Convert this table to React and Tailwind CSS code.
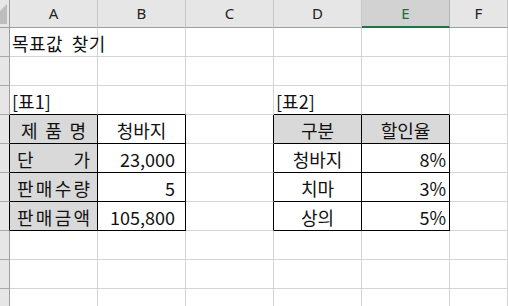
import React from 'react';

const COLS = ['A', 'B', 'C', 'D', 'E', 'F'];
const FONT = { fontFamily: '"Noto Sans CJK KR", "Noto Sans", sans-serif' };

// spread letters across the cell like Excel's distributed alignment
function Spread({ chars, pad }) {
  return (
    <div className={`flex w-full justify-between ${pad}`}>
      {chars.map((c, i) => (
        <span key={i}>{c}</span>
      ))}
    </div>
  );
}

const cells = {
  '1A': { text: '목표값 찾기', align: 'left', extra: 'tracking-[0.5px] [word-spacing:4px]' },
  '3A': { text: '[표1]', align: 'left' },
  '3D': { text: '[표2]', align: 'left' },
  '4A': { node: <Spread chars={['제', '품', '명']} pad="px-[11px]" /> },
  '4B': { text: '청바지', align: 'center' },
  '5A': { node: <Spread chars={['단', '가']} pad="px-[7px]" /> },
  '5B': { text: '23,000', align: 'right', pr: 'pr-[10px]' },
  '6A': { node: <Spread chars={['판', '매', '수', '량']} pad="px-[7px]" /> },
  '6B': { text: '5', align: 'right', pr: 'pr-[10px]' },
  '7A': { node: <Spread chars={['판', '매', '금', '액']} pad="px-[7px]" /> },
  '7B': { text: '105,800', align: 'right', pr: 'pr-[10px]' },
  '4D': { text: '구분', align: 'center' },
  '4E': { text: '할인율', align: 'center' },
  '5D': { text: '청바지', align: 'center' },
  '5E': { text: '8%', align: 'right', pr: 'pr-[3px]' },
  '6D': { text: '치마', align: 'center' },
  '6E': { text: '3%', align: 'right', pr: 'pr-[3px]' },
  '7D': { text: '상의', align: 'center' },
  '7E': { text: '5%', align: 'right', pr: 'pr-[3px]' },
};

function Cell({ row, col }) {
  const key = `${row}${col}`;
  const inT1 = row >= 4 && row <= 7 && (col === 'A' || col === 'B');
  const inT2 = row >= 4 && row <= 7 && (col === 'D' || col === 'E');
  const blackRight = (row >= 4 && row <= 7 && (col === 'B' || col === 'C' || col === 'E')) || inT1 || inT2;
  const blackBottom = (row >= 3 && row <= 7) && (col === 'A' || col === 'B' || col === 'D' || col === 'E');
  const gray = (inT1 && col === 'A') || (inT2 && row === 4);
  const c = cells[key];

  let justify = 'justify-start pl-[2px]';
  if (c?.align === 'center') justify = 'justify-center';
  if (c?.align === 'right') justify = `justify-end ${c.pr}`;

  return (
    <div
      className={`flex h-[29px] items-center overflow-visible whitespace-nowrap border-r border-b pt-[1px] text-[18px] leading-none text-[#111] ${
        blackRight ? 'border-r-black' : 'border-r-[#d4d4d4]'
      } ${blackBottom ? 'border-b-black' : 'border-b-[#d4d4d4]'} ${gray ? 'bg-[#d9d9d9]' : 'bg-white'} ${
        c?.node ? '' : justify
      } ${c?.align === 'left' ? 'relative z-10' : ''} ${c?.extra ?? ''}`}
      style={FONT}
    >
      {c?.node ?? c?.text}
    </div>
  );
}

export default function App() {
  const rows = Array.from({ length: 10 }, (_, i) => i + 1);
  return (
    <div className="h-[306px] w-[508px] overflow-hidden bg-white">
      <div className="grid grid-cols-[10px_88px_88px_88px_88px_88px_1fr]">
        {/* corner */}
        <div className="relative h-[28px] border-r border-b border-r-[#9e9e9e] border-b-[#9e9e9e] bg-[#e6e6e6]">
          <svg className="absolute left-0 top-[4px]" width="7" height="21" viewBox="0 0 7 21">
            <polygon points="7,0 7,20 0,20 0,7" fill="#bdbdbd" />
          </svg>
        </div>
        {COLS.map((col) => (
          <div
            key={col}
            className={`flex h-[28px] items-center justify-center border-r text-[15px] ${
              col === 'E'
                ? 'border-b-2 border-r-[#b5b5b5] border-b-[#217346] bg-[#d2d2d2] text-[#1e6b3e]'
                : 'border-b border-r-[#c6c6c6] border-b-[#9e9e9e] bg-[#e6e6e6] text-[#222]'
            }`}
            style={{ fontFamily: '"Noto Sans", "Open Sans", sans-serif' }}
          >
            {col}
          </div>
        ))}
        {rows.map((row) => (
          <React.Fragment key={row}>
            <div
              className={`h-[29px] border-r border-b border-b-[#a8a8a8] bg-[#e6e6e6] ${
                row >= 4 && row <= 7 ? 'border-r-black' : 'border-r-[#9e9e9e]'
              }`}
            />
            {COLS.map((col) => (
              <Cell key={col} row={row} col={col} />
            ))}
          </React.Fragment>
        ))}
      </div>
    </div>
  );
}
